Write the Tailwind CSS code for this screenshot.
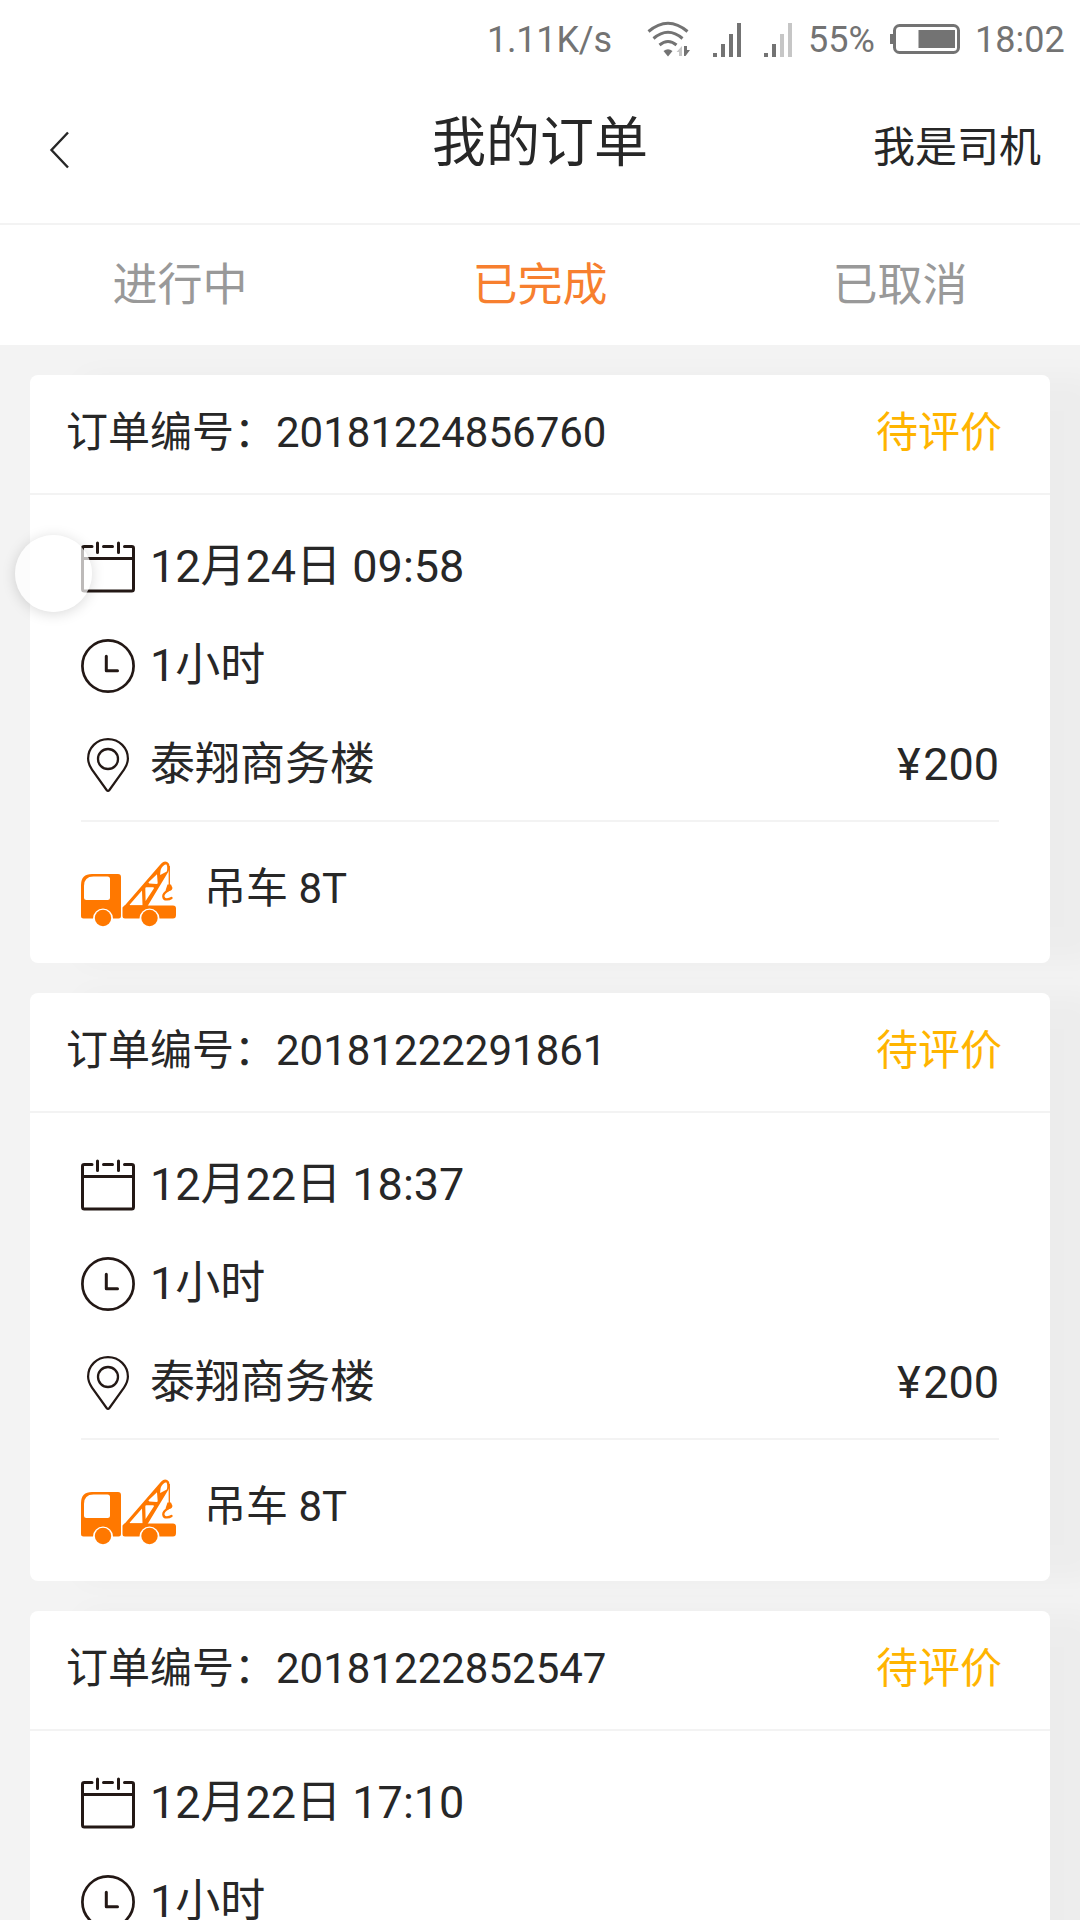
<!DOCTYPE html>
<html lang="zh-CN">
<head>
<meta charset="utf-8">
<title>我的订单</title>
<script src="https://cdn.jsdelivr.net/npm/@tailwindcss/browser@4"></script>
</head>
<body class="bg-[#f3f3f3]">
<svg class="hidden">
  <symbol id="calendar" viewBox="0 0 54 54">
    <g fill="none" stroke="#231815" stroke-width="3" stroke-linecap="round" stroke-linejoin="round">
      <path d="M11 6.500H3.300Q1.500 6.500 1.500 8.300V49Q1.500 51 3.300 51H50.700Q52.500 51 52.500 49V8.300Q52.500 6.500 50.700 6.500H43.500M22.500 6.500H31.500M1.500 18.500H52.500M16.500 3V12.500M37.500 3V12.500"/>
    </g>
  </symbol>
  <symbol id="clock" viewBox="0 0 54 54">
    <circle cx="27" cy="27" r="25.600" fill="none" stroke="#231815" stroke-width="2.700"/>
    <path d="M25.300 17.300V31.700H36.500" fill="none" stroke="#231815" stroke-width="3" stroke-linecap="round" stroke-linejoin="round"/>
  </symbol>
  <symbol id="pin" viewBox="0 0 54 54">
    <path d="M27 1.100C15.600 1.100 7.100 10 7.100 20.600C7.100 25 8.800 28.400 11 31.600L25.600 52Q27 53.800 28.400 52L43 31.600C45.200 28.400 46.900 25 46.900 20.600C46.900 10 38.400 1.100 27 1.100Z" fill="none" stroke="#231815" stroke-width="2.200"/>
    <circle cx="27" cy="21" r="10" fill="none" stroke="#231815" stroke-width="2.300"/>
  </symbol>
  <symbol id="crane" viewBox="0 0 96 66">
    <path fill="#ff7800" fill-rule="evenodd" d="M11 13H37Q40 13 40 16V55Q40 57.500 37.500 57.500H32A10 10 0 0 0 12 57.500H2.500Q0 57.500 0 55V24Q0 13 11 13ZM12.500 15.500Q3 15.500 3 25V36.500Q3 39 5.500 39H26.500Q29 39 29 36.500V18Q29 15.500 26.500 15.500Z"/>
    <circle cx="22" cy="57" r="8.200" fill="#ff7800"/>
    <path fill="#ff7800" d="M43.500 44.500H92Q95 44.500 95 47.500V54Q95 57.500 92 57.500H78.500A10 10 0 0 0 58.500 57.500H44Q41.500 57.500 41.500 55V46.500Z"/>
    <circle cx="68.500" cy="57" r="8.200" fill="#ff7800"/>
    <path fill="#ff7800" fill-rule="evenodd" d="M42.500 46L80 2.700Q84.500 -1.500 88 2.800Q89.300 7 87.500 10.500L66 46ZM61 29.500L48.800 43.500Q48.600 44.300 49.500 44.300H61.500ZM65.500 26.300Q64.300 26.300 64.300 27.500L64.600 40L72.800 27.500Q73.300 26.300 72 26.300ZM76 13.200L67.500 21.200Q67.500 22.300 68.500 22.400L75.500 23Q76.700 23 76.700 22ZM80.500 7Q79 9 79.200 14L85.800 10.500Q86.800 6 85.500 3.600Q83.500 2.500 80.500 7Z"/>
    <g fill="none" stroke="#ff7800">
      <path d="M88.300 5V25" stroke-width="1.300"/>
      <path d="M87 29.500Q82 32.500 82.300 35.500Q82.700 38.600 86 38.400Q88.500 38.300 90.500 37" stroke-width="2.300" stroke-linecap="round"/>
    </g>
    <path fill="#ff7800" d="M86.500 23.500H90L91.500 27Q91 30 86.500 30.500L84.500 29.500Z"/>
  </symbol>
</svg>
<div class="relative flex h-[1920px] w-[1080px] flex-col overflow-hidden bg-[#f3f3f3] font-['Roboto','Noto_Sans_CJK_SC',sans-serif] text-[#272727]">
  <div class="flex h-[78px] shrink-0 items-center bg-white pl-[487px] text-[36px] leading-[78px] whitespace-nowrap text-[#737373]">
    <span class="w-[125px] pt-[2px] tracking-[-0.2px]">1.11K/s</span>
    <svg class="ml-[34px] h-[36px] w-[46px] shrink-0" viewBox="0 0 46 36" fill="none" stroke="#737373" stroke-width="3">
      <path d="M2.500 10.500Q22 -6 41.500 10.500M7.500 17.500Q22 5 36.500 17.500M13.500 24Q22 17 30.500 24"/>
      <path d="M22 35.500L17.500 30Q22 26.500 26.500 30Z" fill="#737373" stroke="none"/>
      <path d="M36 25V35H33V31H30.500Z" fill="#c6c6c6" stroke="none"/>
      <path d="M38 25H41V29H44L39.500 35H38Z" fill="#737373" stroke="none"/>
    </svg>
    <svg class="ml-[21px] h-[35px] w-[29px] shrink-0" viewBox="0 0 29 35" fill="#737373"><path d="M0 31H4V35H0ZM8 22H12V35H8ZM16 12H20V35H16ZM24 1H28V35H24Z"/></svg>
    <svg class="ml-[22px] h-[35px] w-[29px] shrink-0" viewBox="0 0 29 35" fill="#737373"><path d="M0 31H4V35H0ZM8 22H12V35H8Z"/><path fill="#c6c6c6" d="M16 12H20V35H16ZM24 1H28V35H24Z"/></svg>
    <span class="ml-[15px] w-[67px] pt-[2px]">55%</span>
    <svg class="ml-[15px] h-[30px] w-[70px] shrink-0" viewBox="0 0 70 30"><rect x="4.500" y="1.500" width="64" height="27" rx="5" fill="none" stroke="#737373" stroke-width="3"/><path fill="#737373" d="M0 10H3V20H0ZM28.500 6H65V24H28.500Z"/></svg>
    <span class="ml-[15px] pt-[2px]">18:02</span>
  </div>
  <header class="grid h-[147px] shrink-0 grid-cols-[1fr_auto_1fr] border-b-2 border-[#f3f3f3] bg-white">
    <svg class="mt-[53px] ml-[49px] h-[38px] w-[21px]" viewBox="0 0 21 38" fill="none" stroke="#272727" stroke-width="2.400"><path d="M19 1.500L2.500 19L19 36.500"/></svg>
    <h1 class="mt-[26px] text-[54px] leading-[80px]">我的订单</h1>
    <a class="mt-[39px] mr-[39px] text-right text-[42px] leading-[62px]">我是司机</a>
  </header>
  <nav class="grid h-[120px] shrink-0 grid-cols-3 bg-white text-center text-[45px] leading-[122px] text-[#999]">
    <span>进行中</span><span class="text-[#f77f2f]">已完成</span><span>已取消</span>
  </nav>
  <main id="orders" class="flex flex-col gap-[30px] px-[30px] pt-[30px]"></main>
  <div class="absolute top-[535px] left-[15px] size-[77px] rounded-full bg-white/70 shadow-[0_2px_14px_rgba(0,0,0,0.15)]"></div>
</div>
<template id="order">
  <article class="h-[588px] shrink-0 rounded-[8px] bg-white shadow-[50px_0_30px_rgba(0,0,0,0.028)]">
    <div class="flex h-[120px] justify-between border-b-2 border-[#f3f3f3] pr-[48px] pl-[36px] text-[42px] leading-[116px]">
      <span>订单编号：<b class="font-normal"></b></span><span class="text-[#ffb400]">待评价</span>
    </div>
    <div class="px-[51px] pt-[22px] text-[45px] leading-[99px]">
      <div class="flex h-[99px] items-center gap-[15px]"><svg class="size-[54px]"><use href="#calendar"/></svg><time></time></div>
      <div class="flex h-[99px] items-center gap-[15px]"><svg class="size-[54px]"><use href="#clock"/></svg><span>1小时</span></div>
      <div class="flex h-[99px] items-center gap-[15px]"><svg class="size-[54px]"><use href="#pin"/></svg><span>泰翔商务楼</span><span class="ml-auto"><span class="tracking-[2.5px]">¥</span>200</span></div>
      <div class="mt-[6px] h-[2px] bg-[#f3f3f3]"></div>
      <div class="flex h-[132px] gap-[27px] pt-[39px] text-[42px] leading-[56px]"><svg class="h-[66px] w-[96px]"><use href="#crane"/></svg><span>吊车 8T</span></div>
    </div>
  </article>
</template>
<script>
  const orders = [['20181224856760', '12月24日 09:58'], ['20181222291861', '12月22日 18:37'], ['20181222852547', '12月22日 17:10']];
  for (const [number, time] of orders) {
    const card = document.getElementById('order').content.cloneNode(true);
    card.querySelector('b').textContent = number;
    card.querySelector('time').textContent = time;
    document.getElementById('orders').append(card);
  }
</script>
</body>
</html>
